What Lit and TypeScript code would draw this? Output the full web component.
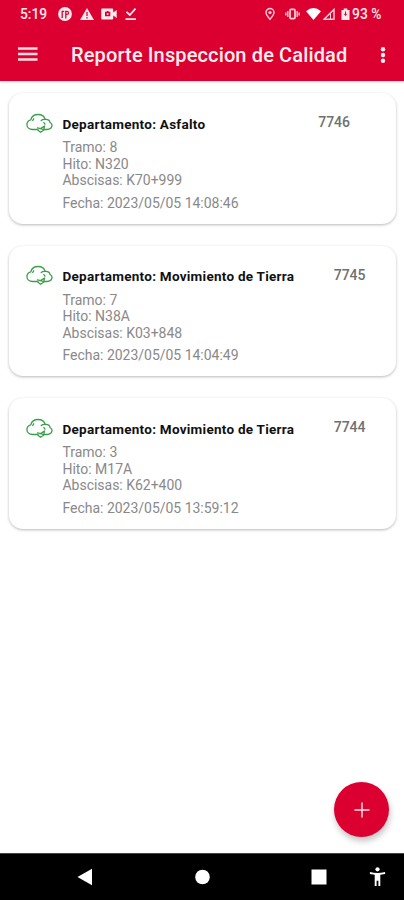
import { LitElement, html, css } from "lit";
import { customElement, property } from "lit/decorators.js";

interface Report {
  id: string;
  department: string;
  tramo: string;
  hito: string;
  abscisas: string;
  fecha: string;
}

const REPORTS: Report[] = [
  { id: "7746", department: "Asfalto", tramo: "8", hito: "N320", abscisas: "K70+999", fecha: "2023/05/05 14:08:46" },
  { id: "7745", department: "Movimiento de Tierra", tramo: "7", hito: "N38A", abscisas: "K03+848", fecha: "2023/05/05 14:04:49" },
  { id: "7744", department: "Movimiento de Tierra", tramo: "3", hito: "M17A", abscisas: "K62+400", fecha: "2023/05/05 13:59:12" },
];

@customElement("status-bar")
class StatusBar extends LitElement {
  static styles = css`
    :host { display: flex; align-items: center; height: 28px; padding: 0 20.5px 0 20px; color: #ffe9ec;
      font: 500 13.8px Roboto, sans-serif; }
    svg { display: block; flex: none; }
    .time { width: 28px; margin-right: 10px; white-space: nowrap; }
    .left { display: flex; align-items: center; gap: 7.5px; }
    .right { display: flex; align-items: center; margin-left: auto; }
    .vibrate { margin-left: 10.5px; }
    .wifi { margin-left: 6px; }
    .signal { margin-left: 1.5px; }
    .battery { margin-left: 6px; }
    .level { margin-left: 2.5px; width: 31.5px; white-space: nowrap; letter-spacing: 0.2px; word-spacing: -0.5px; }
  `;
  render() {
    return html`
      <span class="time">5:19</span>
      <div class="left">
        <svg width="14" height="14" viewBox="0 0 14 14">
          <circle cx="7" cy="7" r="6.9" fill="#ffe9ec" />
          <path d="M4.2 11V4.400H6.200M7.800 11.500V4.400H9a1.500 1.500 0 0 1 0 3H7.800" fill="none" stroke="#dc0030" stroke-width="1.300" />
        </svg>
        <svg width="14" height="14" viewBox="0 0 14 14">
          <path d="M7 1L14 13H0Z" fill="#ffe9ec" />
          <path d="M7 5v4M7 10v1.6" stroke="#dc0030" stroke-width="1.3" />
        </svg>
        <svg width="16" height="14" viewBox="0 0 16 14">
          <path d="M1.2 1.5h10q1 0 1 1v3L15.7 3v8L12.2 8.5v3q0 1-1 1h-10q-1 0-1-1v-9q0-1 1-1z" fill="#ffe9ec" />
          <path d="M4 4.8h1.600l.5-.8h1.200l.5.8h1.500v4.400H4z" fill="#dc0030" />
          <circle cx="6.600" cy="7" r="1" fill="#ffe9ec" />
        </svg>
        <svg width="12" height="14" viewBox="0 0 12 14">
          <path d="M1.5 4.800L4.800 8L10.500 1.600M.5 12.200h10.500" fill="none" stroke="#ffe9ec" stroke-width="1.800" />
        </svg>
      </div>
      <div class="right">
        <svg width="10" height="14" viewBox="0 0 10 14">
          <path d="M5 12.300C3 9.800 1 7.800 1 5.500a4 4 0 0 1 8 0C9 7.800 7 9.800 5 12.300z" fill="none" stroke="#ffd0d8" stroke-width="1.400" />
          <circle cx="5" cy="5.500" r="1.600" fill="#ffd0d8" />
        </svg>
        <svg class="vibrate" width="15" height="14" viewBox="0 0 15 14">
          <path d="M.8 5.500v3M2.800 4v6M14.200 5.500v3M12.200 4v6" stroke="#ffb5c2" stroke-width="1.500" />
          <rect x="5" y="2.400" width="5" height="9.200" rx="1" fill="none" stroke="#ffd0d8" stroke-width="1.700" />
        </svg>
        <svg class="wifi" width="15" height="14" viewBox="0 0 15 14">
          <path d="M0 4.200Q7.500-2 15 4.200L7.500 13z" fill="#fff" />
        </svg>
        <svg class="signal" width="12" height="14" viewBox="0 0 12 14">
          <path d="M1 12.300L11 2.500v9.800z" fill="none" stroke="#ffd0d8" stroke-width="1.400" />
          <path d="M7.500 6.500v5.500" stroke="#ffd0d8" stroke-width="1" />
        </svg>
        <svg class="battery" width="9" height="14" viewBox="0 0 9 14">
          <path d="M.5 3h2.200V1.600h3.600V3h2.200v10H.5z" fill="#ffe9ec" />
          <path d="M4.500 4.500v3.500M3.300 6.800L4.500 8.500L5.700 6.800" fill="none" stroke="#dc0030" stroke-width="1" />
        </svg>
        <span class="level">93 %</span>
      </div>
    `;
  }
}

@customElement("top-bar")
class TopBar extends LitElement {
  static styles = css`
    :host { display: flex; align-items: center; height: 53px; padding: 0 17.5px 0 18px; color: #ffeef0; }
    svg { display: block; flex: none; }
    .menu { margin-bottom: 2px; }
    .title { margin: 0 auto 0 33px; font: 500 20px/26px Roboto, sans-serif; letter-spacing: 0.13px; white-space: nowrap; }
  `;
  render() {
    return html`
      <svg class="menu" width="20" height="16" viewBox="0 0 20 16">
        <path d="M0 2.500h19.500M0 8h19.500M0 13.500h19.500" stroke="#ffdde2" stroke-width="2.400" />
      </svg>
      <span class="title">Reporte Inspeccion de Calidad</span>
      <svg width="8" height="18" viewBox="0 0 8 18">
        <circle cx="4" cy="3.200" r="2.200" fill="#ffeef0" />
        <circle cx="4" cy="9" r="2.200" fill="#ffeef0" />
        <circle cx="4" cy="14.800" r="2.200" fill="#ffeef0" />
      </svg>
    `;
  }
}

@customElement("report-card")
class ReportCard extends LitElement {
  @property({ attribute: false }) report!: Report;
  static styles = css`
    :host { display: flex; align-items: flex-start; box-sizing: border-box; height: 130.5px; padding: 20.4px 30.5px 0 17px;
      border-radius: 14px; background: #fff; box-shadow: 0 1px 3px rgba(0, 0, 0, 0.28);
      font: 400 14px/16.4px Roboto, sans-serif; color: #898989; white-space: nowrap; }
    .cloud { display: block; flex: none; margin: -0.9px 9.5px 0 0; }
    .body { width: 233px; flex: none; letter-spacing: -0.02px; }
    .name { font-weight: 700; font-size: 13.5px; line-height: 18px; color: #111; margin: 1.5px 0 6.5px; letter-spacing: 0.26px; }
    .date { margin-top: 6px; }
    .number { line-height: 18px; font-weight: 500; color: #707070; margin-left: auto; }
    .number.near { margin-right: 15.5px; }
  `;
  render() {
    const r = this.report;
    return html`
      <svg class="cloud" width="27" height="22" viewBox="0 0 27 22">
        <g fill="none" stroke="#3a9f4a" stroke-width="1.300" stroke-linecap="round" stroke-linejoin="round">
          <path d="M12 16.500H6.800C3.200 16.500 .9 14.300 .9 11.500C.9 8.900 2.600 7.400 4.800 6.800C5.500 3.600 8.500 1.500 12 1.500C15.500 1.500 18.300 3.500 19.300 6.400C22 6.200 24 7.400 24 9.500C25.600 10.300 26.200 11.400 26 12.700C25.600 15 23.600 16.500 21 16.500H18" />
          <path d="M6.700 7.500L7.700 5.800M15.200 7.500C16.200 6.500 18 6.300 19.300 6.400M17.800 9.500L19 11.200" />
          <path d="M11.500 14.800L14.600 15.600L18.500 13L17.600 17.300L14.500 19.300L12 17.300M14.600 15.600L17 16.500" />
        </g>
      </svg>
      <div class="body">
        <div class="name">Departamento: ${r.department}</div>
        <div>Tramo: ${r.tramo}</div>
        <div>Hito: ${r.hito}</div>
        <div>Abscisas: ${r.abscisas}</div>
        <div class="date">Fecha: ${r.fecha}</div>
      </div>
      <div class="number ${r.department.length < 10 ? "near" : ""}">${r.id}</div>
    `;
  }
}

@customElement("nav-bar")
class NavBar extends LitElement {
  static styles = css`
    :host { display: flex; align-items: center; box-sizing: border-box; height: 47px; padding: 0 18px 0 77px; background: #000;
      border-top: 1px solid #444; }
    svg { display: block; flex: none; }
    .home { margin-left: 102px; }
    .recent { margin-left: 101px; }
    .access { margin-left: auto; }
  `;
  render() {
    return html`
      <svg width="16" height="18" viewBox="0 0 16 18"><path d="M.5 9L15 .8v16.400z" fill="#fff" /></svg>
      <svg class="home" width="15" height="16" viewBox="0 0 15 16"><circle cx="7.500" cy="8" r="7.300" fill="#fff" /></svg>
      <svg class="recent" width="16" height="16" viewBox="0 0 16 16"><rect x=".5" y=".5" width="15" height="15" fill="#fff" /></svg>
      <svg class="access" width="17" height="20" viewBox="0 0 17 20">
        <circle cx="8.500" cy="2.300" r="2.100" fill="#fff" />
        <path d="M.9 5Q8.500 6.800 16.100 5V7L11.300 7.800V19H9.400V13.800H7.600V19H5.700V7.800L.9 7z" fill="#fff" />
      </svg>
    `;
  }
}

@customElement("app-root")
class AppRoot extends LitElement {
  static styles = css`
    :host { display: flex; flex-direction: column; width: 404px; height: 900px; overflow: hidden; position: relative; background: #fff; }
    .header { height: 81px; flex: none; background: #dc0030; box-shadow: 0 1px 3px rgba(0, 0, 0, 0.15); }
    .list { flex: 1; display: flex; flex-direction: column; gap: 22px; padding: 12px 8px 0 9px; }
    .fab { position: absolute; right: 15px; bottom: 63px; width: 55px; height: 55px; padding: 0; border: 0; border-radius: 50%;
      background: #dc0030; display: grid; place-items: center; box-shadow: 1px 4px 6px rgba(0, 0, 0, 0.24); }
    .fab svg { display: block; }
  `;
  render() {
    return html`
      <div class="header"><status-bar></status-bar><top-bar></top-bar></div>
      <div class="list">${REPORTS.map((r) => html`<report-card .report=${r}></report-card>`)}</div>
      <button class="fab" aria-label="Agregar">
        <svg width="16" height="16" viewBox="0 0 16 16"><path d="M8 .5v15M.5 8h15" stroke="#ffe4e8" stroke-width="1.400" /></svg>
      </button>
      <nav-bar></nav-bar>
    `;
  }
}
